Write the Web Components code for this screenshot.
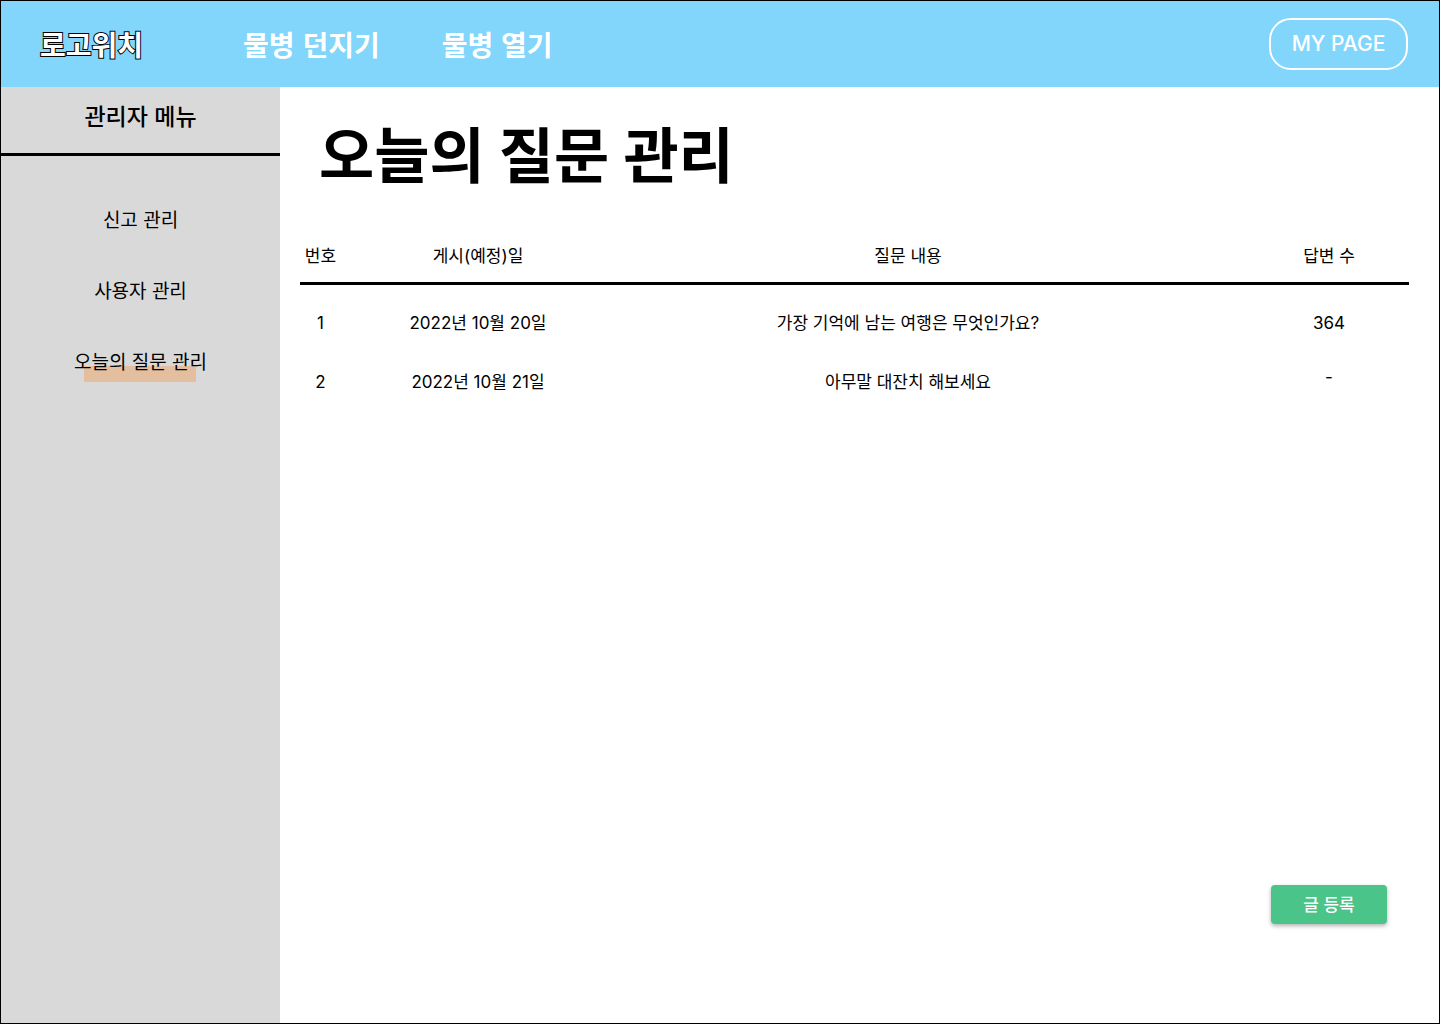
<!DOCTYPE html>
<html lang="ko">
<head>
<meta charset="utf-8">
<meta name="viewport" content="width=device-width, initial-scale=1">
<title>오늘의 질문 관리</title>
<style>
  html { height: 100%; }
  body {
    margin: 0;
    min-height: 100%;
    box-sizing: border-box;
    border: 1px solid #000;
    display: flex;
    font-family: "Inter", "Noto Sans CJK KR", sans-serif;
    color: #000;
    background: #fff;
  }
</style>
</head>
<body>
<admin-app></admin-app>

<script>
const define = (name, html) => {
  const template = document.createElement('template');
  template.innerHTML = html;
  customElements.define(name, class extends HTMLElement {
    constructor() {
      super();
      this.attachShadow({ mode: 'open' }).append(template.content.cloneNode(true));
    }
  });
};

define('nav-link', `
  <style>
    :host { display: block; }
    a { color: #fff; font-size: 28px; line-height: 40px; font-weight: 700; text-decoration: none; white-space: nowrap; }
  </style>
  <a href="#"><slot></slot></a>`);

define('site-header', `
  <style>
    :host {
      display: flex; align-items: center; height: 86px; padding: 0 31px 0 39px; background: #82d5fb; box-sizing: border-box;
      font-family: "Noto Sans CJK KR", sans-serif;
    }
    .logo {
      color: #fff; font-size: 28px; line-height: 40px; font-weight: 700; text-decoration: none;
      -webkit-text-stroke: 2px #000; paint-order: stroke fill; white-space: nowrap;
    }
    nav { display: flex; gap: 62px; margin-left: 100px; flex: 1; }
    .my {
      width: 139px; height: 52px; border: 2px solid #fff; border-radius: 22px; background: none;
      color: #fff; font: 500 21px/24px "Inter", sans-serif; padding: 0; cursor: pointer;
    }
  </style>
  <a class="logo" href="#">로고위치</a>
  <nav><slot></slot></nav>
  <button class="my" type="button">MY PAGE</button>`);

define('menu-item', `
  <style>
    :host { display: block; }
    a { display: inline-block; color: #000; font-size: 19px; line-height: 30px; text-decoration: none; padding-bottom: 6px; }
    :host([active]) a {
      background: linear-gradient(#e4bf9f, #e4bf9f) center bottom / 112px 16px no-repeat;
    }
  </style>
  <a href="#"><slot></slot></a>`);

define('side-menu', `
  <style>
    :host {
      display: block; width: 279px; flex: none; background: #d9d9d9; text-align: center;
      font-family: "Noto Sans CJK KR", sans-serif;
    }
    h2 { margin: 0; padding: 12px 0 22px; font-size: 23px; line-height: 32px; font-weight: 500; border-bottom: 3px solid #000; }
    nav { display: flex; flex-direction: column; gap: 35px; padding-top: 48px; }
  </style>
  <h2>관리자 메뉴</h2>
  <nav><slot></slot></nav>`);

define('question-table', `
  <style>
    :host { display: block; }
    table { width: 100%; border-collapse: collapse; table-layout: fixed; font-size: 17px; line-height: 24px; text-align: center; }
    .no { width: 89px; } .date { width: 178px; } .count { width: 160px; }
    th, td { padding: 0; font-weight: 400; }
    th { padding-bottom: 14px; border-bottom: 3px solid #000; }
    td { padding: 17px 0 18px; }
    tbody tr:first-child td { padding-top: 26px; }
    th:first-child, td:first-child { padding-right: 48px; }
    td.empty { vertical-align: top; line-height: 14px; }
  </style>
  <table>
    <colgroup><col class="no"><col class="date"><col><col class="count"></colgroup>
    <thead>
      <tr><th scope="col">번호</th><th scope="col">게시(예정)일</th><th scope="col">질문 내용</th><th scope="col">답변 수</th></tr>
    </thead>
    <tbody>
      <tr><td>1</td><td>2022년 10월 20일</td><td>가장 기억에 남는 여행은 무엇인가요?</td><td>364</td></tr>
      <tr><td>2</td><td>2022년 10월 21일</td><td>아무말 대잔치 해보세요</td><td class="empty">-</td></tr>
    </tbody>
  </table>`);

define('primary-button', `
  <style>
    :host { display: block; }
    button {
      width: 116px; height: 39px; border: 0; border-radius: 4px; padding: 0; background: #4ac488; color: #fff;
      font: 500 17px/24px "Inter", "Noto Sans CJK KR", sans-serif; box-shadow: 0 2px 4px rgba(0, 0, 0, .3); cursor: pointer;
    }
  </style>
  <button type="button"><slot></slot></button>`);

define('question-page', `
  <style>
    :host { display: flex; flex-direction: column; flex: 1; min-width: 0; padding: 33px 30px 99px 20px; }
    h1 { margin: 0; padding-left: 19px; font-size: 60px; line-height: 72px; font-weight: 700; }
    question-table { margin-top: 52px; }
    primary-button { margin: auto 22px 0 auto; }
  </style>
  <h1>오늘의 질문 관리</h1>
  <question-table></question-table>
  <primary-button>글 등록</primary-button>`);

define('admin-app', `
  <style>
    :host { display: flex; flex-direction: column; flex: 1; min-width: 0; }
    .body { display: flex; flex: 1; }
  </style>
  <site-header>
    <nav-link>물병 던지기</nav-link>
    <nav-link>물병 열기</nav-link>
  </site-header>
  <div class="body">
    <side-menu>
      <menu-item>신고 관리</menu-item>
      <menu-item>사용자 관리</menu-item>
      <menu-item active>오늘의 질문 관리</menu-item>
    </side-menu>
    <question-page></question-page>
  </div>`);
</script>
</body>
</html>
